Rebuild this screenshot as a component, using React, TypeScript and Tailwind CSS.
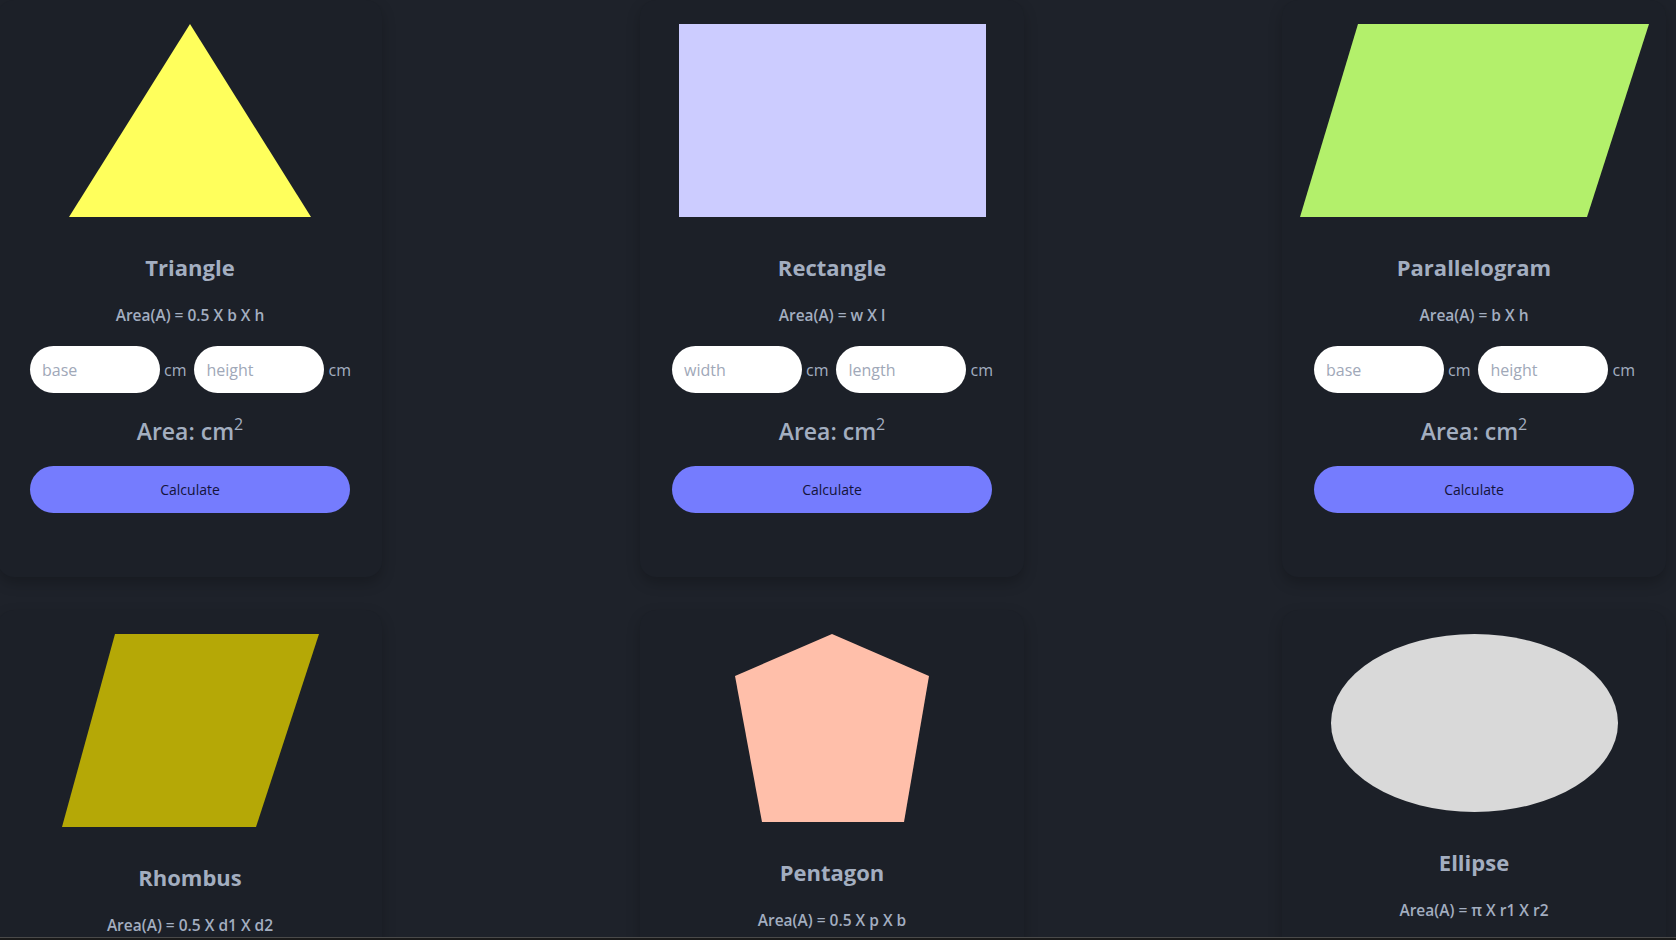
import React from "react";

type Shape = {
  name: string;
  formula: string;
  fields?: [string, string];
  shape: React.ReactNode;
};

const shapes: Shape[] = [
  {
    name: "Triangle",
    formula: "Area(A) = 0.5 X b X h",
    fields: ["base", "height"],
    shape: (
      <svg width="242" height="193" viewBox="0 0 242 193" className="block">
        <polygon points="121,0 242,193 0,193" fill="#ffff5c" />
      </svg>
    ),
  },
  {
    name: "Rectangle",
    formula: "Area(A) = w X l",
    fields: ["width", "length"],
    shape: <div className="w-[307px] h-[193px] bg-[#ccccff] shrink-0" />,
  },
  {
    name: "Parallelogram",
    formula: "Area(A) = b X h",
    fields: ["base", "height"],
    shape: (
      <svg width="349" height="193" viewBox="0 0 349 193" className="block shrink-0">
        <polygon points="58,0 349,0 287,193 0,193" fill="#b3f06b" />
      </svg>
    ),
  },
  {
    name: "Rhombus",
    formula: "Area(A) = 0.5 X d1 X d2",
    shape: (
      <svg width="257" height="193" viewBox="0 0 257 193" className="block">
        <polygon points="53,0 257,0 194,193 0,193" fill="#b5a806" />
      </svg>
    ),
  },
  {
    name: "Pentagon",
    formula: "Area(A) = 0.5 X p X b",
    shape: (
      <svg width="194" height="188" viewBox="0 0 194 188" className="block">
        <polygon points="97,0 194,42 169,188 27,188 0,42" fill="#ffbfaa" />
      </svg>
    ),
  },
  {
    name: "Ellipse",
    formula: "Area(A) = π X r1 X r2",
    shape: <div className="w-[287px] h-[178px] rounded-[50%] bg-[#d9d9d9] shrink-0" />,
  },
];

function Card({ s }: { s: Shape }) {
  return (
    <div className="w-[384px] rounded-2xl bg-[#1c2028] shadow-[0_6px_14px_rgba(0,0,0,0.22)] px-8 pt-6 pb-16 flex flex-col items-center">
      <div className="flex justify-center">{s.shape}</div>
      <h2 className="mt-[34px] text-[22px] leading-[32px] font-bold text-[#a3aec0]">{s.name}</h2>
      <p className="mt-[20px] text-[15.5px] leading-[24px] font-semibold text-[#a3aec0]">{s.formula}</p>
      {s.fields && (
        <>
          <div className="mt-[19px] w-full flex items-center gap-2">
            {s.fields.map((f) => (
              <div key={f} className="flex items-center gap-1">
                <input
                  placeholder={f}
                  className="w-[130px] h-[47px] rounded-full bg-white pl-3 pr-3 text-[16px] text-[#333] placeholder:text-[#a0a8b8] outline-none"
                />
                <span className="text-[16px] text-[#a3aec0]">cm</span>
              </div>
            ))}
          </div>
          <div className="mt-[22px] h-[32px] text-[23px] leading-[32px] font-semibold text-[#a3aec0]">
            Area: cm<span className="relative -top-[10px] text-[16px] leading-none font-medium align-baseline">2</span>
          </div>
          <button className="mt-[19px] w-full h-[47px] rounded-full bg-[#757cfe] text-[14px] font-medium text-[#13133a]">
            Calculate
          </button>
        </>
      )}
    </div>
  );
}

export default function App() {
  return (
    <div
      className="h-[940px] w-full bg-[#1e222a] flex flex-col overflow-hidden"
      style={{ fontFamily: '"Open Sans", "Noto Sans", sans-serif' }}
    >
      <div className="flex-1 overflow-hidden">
        <div className="-ml-[2px] grid grid-cols-[384px_384px_384px] gap-x-[258px] gap-y-[33px] items-start">
          {shapes.map((s) => (
            <Card key={s.name} s={s} />
          ))}
        </div>
      </div>
      <div className="h-[3px] border-t border-[#4a4a4a] bg-[#1a1a1a]" />
    </div>
  );
}
